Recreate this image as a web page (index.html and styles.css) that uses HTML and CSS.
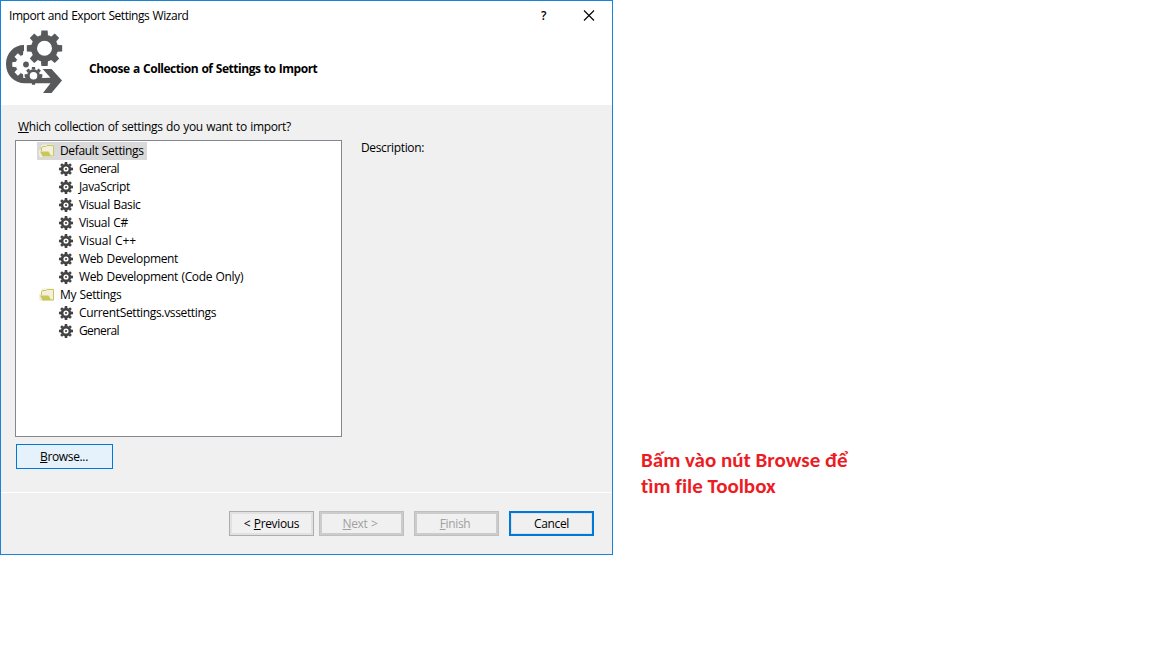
FILE: index.html
```html
<!DOCTYPE html>
<html lang="vi">
<head>
<meta charset="utf-8">
<title>Import and Export Settings Wizard</title>
<link rel="stylesheet" href="styles.css">
</head>
<body>
<svg class="defs" width="0" height="0">
  <defs>
    <g id="gear-teeth">
      <path id="tooth" d="M-3.4-12L-3-17H3L3.4-12Z"/>
      <use href="#tooth" transform="rotate(45)"/><use href="#tooth" transform="rotate(90)"/>
      <use href="#tooth" transform="rotate(135)"/><use href="#tooth" transform="rotate(180)"/>
      <use href="#tooth" transform="rotate(225)"/><use href="#tooth" transform="rotate(270)"/>
      <use href="#tooth" transform="rotate(315)"/>
    </g>
    <symbol id="gear" viewBox="0 0 16 16">
      <g transform="translate(8 8)" fill="#424242">
        <circle r="3.9" fill="none" stroke="#424242" stroke-width="2.6"/>
        <circle r="1.1"/>
        <use href="#gear-teeth" transform="scale(.412)"/>
      </g>
    </symbol>
    <symbol id="folder" viewBox="0 0 16 16">
      <path d="M0 7H2V3L3.500 1.500H15V14H1L0 12Z" fill="#f3f0dc"/>
      <path d="M7 3.500L8 2.500H14.500V13H12" fill="none" stroke="#c9c65c"/>
      <path d="M2.500 8V4.500L4 3.500H7" fill="none" stroke="#c9c65c"/>
      <path d="M1 8.500H9.500L12.500 13.500H3.500Z" fill="#c9c65c"/>
    </symbol>
  </defs>
</svg>
<main class="page">
  <section class="dialog">
    <header class="header">
      <div class="titlebar">
        <span class="title">Import and Export Settings Wizard</span>
        <span class="help">?</span>
        <svg class="close" width="12" height="12" viewBox="0 0 12 12"><path d="M1 .5L11 10.500M11 .5L1 10.500" stroke="#000" stroke-width="1.100"/></svg>
      </div>
      <div class="banner">
        <svg class="logo" width="58" height="64" viewBox="5 30 58 64">
          <path d="M24 45C14 45 6 53 6 64S14 83.300 25 83.300H50.500L43 93H51.500L62 80.500L51.500 69H42.700L50.500 77.700H38V58H24Z" fill="#58595b"/>
          <path d="M24 51H44V69H41L47 77.700H38L35 72H24Z" fill="#fff"/>
          <g transform="translate(25.700 64.500)" fill="#fff"><circle r="10"/><use href="#gear-teeth" transform="scale(.79)"/></g>
          <circle cx="26" cy="64.500" r="2.900" fill="#58595b"/>
          <path d="M25 83V78L29 73H38L42 77.700V83Z" fill="#58595b"/>
          <g transform="translate(33.500 75.800)" fill="#58595b"><circle r="6.500"/><use href="#gear-teeth" transform="scale(.52)"/><circle r="3.800" fill="#fff"/></g>
          <path d="M25 43H27V54H25ZM37 65H53V69H42.500Z" fill="#fff"/>
          <g transform="translate(44.500 48.300)" fill="#58595b"><circle r="13.500"/><use href="#gear-teeth" transform="rotate(0) scale(1.040)"/><circle r="7.500" fill="#fff"/></g>
        </svg>
        <h1 class="heading">Choose a Collection of Settings to Import</h1>
      </div>
    </header>
    <div class="body">
      <div class="collection">
        <p class="question"><u>W</u>hich collection of settings do you want to import?</p>
        <ul class="tree">
          <li class="row folder selected"><svg class="icon"><use href="#folder"/></svg><span>Default Settings</span></li>
          <li class="row"><svg class="icon"><use href="#gear"/></svg><span class="short">General</span></li>
          <li class="row"><svg class="icon"><use href="#gear"/></svg><span>JavaScript</span></li>
          <li class="row"><svg class="icon"><use href="#gear"/></svg><span>Visual Basic</span></li>
          <li class="row"><svg class="icon"><use href="#gear"/></svg><span>Visual C#</span></li>
          <li class="row"><svg class="icon"><use href="#gear"/></svg><span class="wide">Visual C++</span></li>
          <li class="row"><svg class="icon"><use href="#gear"/></svg><span>Web Development</span></li>
          <li class="row"><svg class="icon"><use href="#gear"/></svg><span>Web Development (Code Only)</span></li>
          <li class="row folder"><svg class="icon"><use href="#folder"/></svg><span>My Settings</span></li>
          <li class="row"><svg class="icon"><use href="#gear"/></svg><span>CurrentSettings.vssettings</span></li>
          <li class="row"><svg class="icon"><use href="#gear"/></svg><span class="short">General</span></li>
        </ul>
        <button class="button browse"><span><u>B</u>rowse...</span></button>
      </div>
      <p class="description">Description:</p>
    </div>
    <footer class="footer">
      <button class="button"><span>&lt; <u>P</u>revious</span></button>
      <button class="button disabled next"><span><u>N</u>ext &gt;</span></button>
      <button class="button disabled finish"><span><u>F</u>inish</span></button>
      <button class="button cancel"><span>Cancel</span></button>
    </footer>
  </section>
  <aside class="note">Bấm vào nút Browse để<br>tìm file Toolbox</aside>
</main>
</body>
</html>
```
FILE: styles.css
```css
* { box-sizing: border-box; }
body { margin: 0; background: #fff; color: #000; font: 12px/18px "Open Sans", "Noto Sans", sans-serif; letter-spacing: -0.35px; word-spacing: 0.7px; }
p, h1, ul { margin: 0; padding: 0; }
u { text-underline-offset: 1px; text-decoration-thickness: 1px; text-decoration-skip-ink: none; }
.defs { position: absolute; }
.page { display: flex; width: 1152px; height: 648px; overflow: hidden; }
.dialog { display: flex; flex-direction: column; flex: none; width: 613px; height: 555px; border: 1px solid #1883d7; background: #f0f0f0; }
.header { height: 104px; background: #fff; }
.titlebar { display: flex; align-items: center; height: 29px; padding: 0 17px 0 8px; }
.title { flex: 1; letter-spacing: -0.46px; }
.help { margin-right: 37px; font-weight: 600; }
.banner { display: flex; padding-left: 4px; }
.logo { flex: none; }
.heading { margin: 30px 0 0 26px; font-size: 12px; line-height: 18px; font-weight: 700; letter-spacing: -0.48px; white-space: nowrap; }
.body { display: flex; gap: 19px; height: 387px; padding: 13px 14px 0; }
.collection { width: 327px; }
.question { padding-left: 3px; }
.tree { height: 297px; margin-top: 4px; padding: 1px 0 0 21px; border: 1px solid #828790; background: #fff; list-style: none; }
.row { display: flex; align-items: center; width: max-content; height: 18px; padding-left: 21px; gap: 5px; white-space: nowrap; }
.folder { padding: 0 3px 0 2px; gap: 5px; }
.selected { width: 110px; background: #d9d9d9; }
.short { letter-spacing: -0.6px; }
.wide { letter-spacing: -0.1px; }
.icon { width: 16px; height: 16px; }
.button { display: flex; justify-content: center; align-items: center; width: 85px; height: 25px; padding: 0; border: 1px solid #adadad; background: #f0f0f0; box-shadow: inset 0 0 0 2px #e1e1e1; color: #000; font: inherit; letter-spacing: inherit; word-spacing: inherit; }
.browse { width: 97px; margin: 7px 0 0 1px; padding-right: 1px; border-color: #0078d7; background: #e5f1fb; box-shadow: none; }
.description { margin-top: 21px; }
.footer { display: flex; height: 62px; padding: 18px 0 0 228px; border-top: 1px solid #fff; }
.disabled { padding-right: 3px; border-color: #bfbfbf; box-shadow: inset 0 0 0 2px #ccc; color: #a0a0a0; }
.next { margin-left: 5px; }
.finish, .cancel { margin-left: 10px; }
.cancel { border: 2px solid #0078d7; box-shadow: inset 0 0 0 1px #e1e1e1; }
.note { padding: 447px 0 0 28px; color: #ed1c24; font: 700 21px/26px Carlito, "Open Sans", sans-serif; font-variant-ligatures: none; letter-spacing: 0; word-spacing: 0; white-space: nowrap; }
```
